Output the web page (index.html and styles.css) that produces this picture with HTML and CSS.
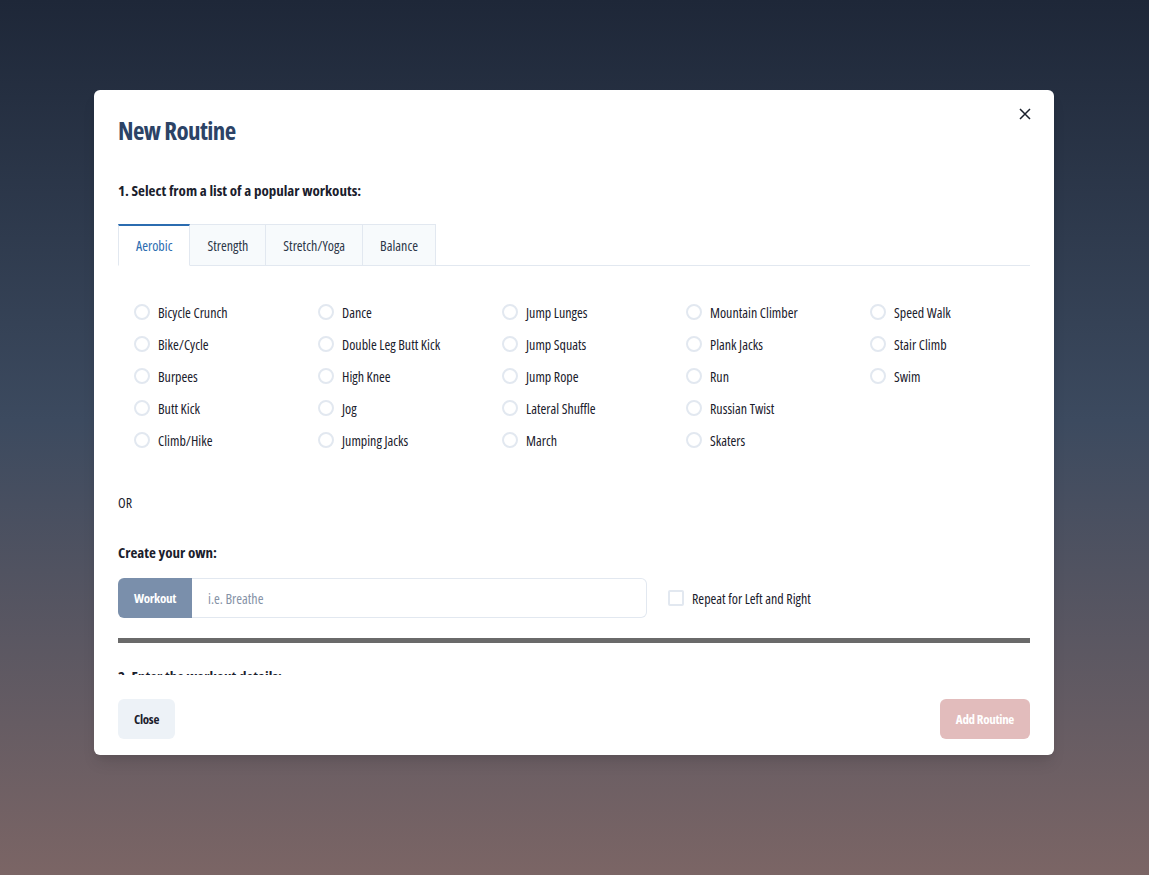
FILE: index.html
```html
<!DOCTYPE html>
<html lang="en">
<head>
<meta charset="utf-8">
<title>New Routine</title>
<link rel="stylesheet" href="styles.css">
</head>
<body>
<div class="backdrop">
  <section class="modal">
    <header class="modal-header">
      <h2 class="modal-title">New Routine</h2>
      <button class="close-x" aria-label="Close">
        <svg width="12" height="12" viewBox="0 0 12 12"><path d="M1 1L11 11M11 1L1 11" stroke="#1a202c" stroke-width="1.5" fill="none"/></svg>
      </button>
    </header>
    <div class="modal-body">
      <h3 class="section-title">1. Select from a list of a popular workouts:</h3>
      <div class="tabs">
        <div class="tab active">Aerobic</div>
        <div class="tab">Strength</div>
        <div class="tab">Stretch/Yoga</div>
        <div class="tab">Balance</div>
      </div>
      <div class="tab-panel">
        <div class="radio-grid">
          <label class="radio"><span class="circle"></span>Bicycle Crunch</label>
          <label class="radio"><span class="circle"></span>Bike/Cycle</label>
          <label class="radio"><span class="circle"></span>Burpees</label>
          <label class="radio"><span class="circle"></span>Butt Kick</label>
          <label class="radio"><span class="circle"></span>Climb/Hike</label>
          <label class="radio"><span class="circle"></span>Dance</label>
          <label class="radio"><span class="circle"></span>Double Leg Butt Kick</label>
          <label class="radio"><span class="circle"></span>High Knee</label>
          <label class="radio"><span class="circle"></span>Jog</label>
          <label class="radio"><span class="circle"></span>Jumping Jacks</label>
          <label class="radio"><span class="circle"></span>Jump Lunges</label>
          <label class="radio"><span class="circle"></span>Jump Squats</label>
          <label class="radio"><span class="circle"></span>Jump Rope</label>
          <label class="radio"><span class="circle"></span>Lateral Shuffle</label>
          <label class="radio"><span class="circle"></span>March</label>
          <label class="radio"><span class="circle"></span>Mountain Climber</label>
          <label class="radio"><span class="circle"></span>Plank Jacks</label>
          <label class="radio"><span class="circle"></span>Run</label>
          <label class="radio"><span class="circle"></span>Russian Twist</label>
          <label class="radio"><span class="circle"></span>Skaters</label>
          <label class="radio"><span class="circle"></span>Speed Walk</label>
          <label class="radio"><span class="circle"></span>Stair Climb</label>
          <label class="radio"><span class="circle"></span>Swim</label>
        </div>
      </div>
      <p class="or">OR</p>
      <h3 class="section-title own">Create your own:</h3>
      <div class="own-row">
        <div class="input-group">
          <span class="addon">Workout</span>
          <span class="input-field">i.e. Breathe</span>
        </div>
        <label class="check"><span class="box"></span>Repeat for Left and Right</label>
      </div>
      <div class="divider"></div>
      <h3 class="section-title step2">2. Enter the workout details:</h3>
    </div>
    <footer class="modal-footer">
      <button class="btn btn-close">Close</button>
      <button class="btn btn-add">Add Routine</button>
    </footer>
  </section>
</div>
</body>
</html>
```
FILE: styles.css
```css
* { box-sizing: border-box; }
html, body { margin: 0; padding: 0; }
body {
  font-family: "Open Sans", "DejaVu Sans Condensed", sans-serif;
  font-stretch: 75%;
  color: #1a202c;
}
.backdrop {
  width: 1149px;
  height: 875px;
  padding-top: 90px;
  padding-left: 94px;
  background: linear-gradient(to bottom, #1e2738 0%, #3c4a5f 48%, #7b6565 100%);
}
.modal {
  position: relative;
  width: 960px;
  background: #fff;
  border-radius: 6px;
  box-shadow: 0 10px 15px -3px rgba(0,0,0,.1), 0 4px 6px -2px rgba(0,0,0,.05);
}
.modal-header { padding: 22px 24px 0; }
.modal-title {
  margin: 0;
  font-size: 25px;
  letter-spacing: -0.6px;
  line-height: 36px;
  font-weight: 700;
  color: #2c4366;
}
.close-x {
  position: absolute;
  top: 8px;
  right: 13px;
  width: 32px;
  height: 32px;
  border: 0;
  background: transparent;
  padding: 0;
  display: flex;
  align-items: center;
  justify-content: center;
}
.modal-body {
  height: 527px;
  overflow: hidden;
  padding: 32px 24px 0;
}
.section-title {
  margin: 0;
  font-size: 15px;
  line-height: 20px;
  font-weight: 700;
  color: #1a202c;
}
.tabs {
  display: flex;
  margin-top: 24px;
  border-bottom: 1px solid #e2e8f0;
}
.tab {
  height: 42px;
  margin-bottom: -1px;
  padding: 0 17px;
  display: flex;
  align-items: center;
  font-size: 14px;
  color: #2d3748;
  background: #f7fafc;
  border: 1px solid #e2e8f0;
  border-left-width: 0;
}
.tab.active {
  background: #fff;
  color: #2b6cb0;
  border-left-width: 1px;
  border-top: 2px solid #2b6cb0;
  border-bottom-color: #fff;
}
.tab-panel { padding: 30px 16px 0; }
.radio-grid {
  display: grid;
  grid-template-rows: repeat(5, 32px);
  grid-auto-flow: column;
  grid-template-columns: repeat(5, 184px);
}
.radio {
  display: flex;
  align-items: center;
  font-size: 14px;
  color: #1a202c;
}
.circle {
  width: 16px;
  height: 16px;
  border: 2px solid #e2e8f0;
  border-radius: 50%;
  margin-right: 8px;
  flex: none;
}
.or {
  margin: 37px 0 0;
  font-size: 14px;
  line-height: 20px;
}
.own { margin-top: 29px; }
.own-row {
  display: flex;
  align-items: center;
  margin-top: 16px;
}
.input-group {
  display: flex;
  width: 529px;
  height: 40px;
}
.addon {
  width: 74px;
  display: flex;
  align-items: center;
  justify-content: center;
  background: #7a8fab;
  color: #fff;
  font-weight: 700;
  font-size: 13px;
  letter-spacing: -0.3px;
  border-radius: 6px 0 0 6px;
}
.input-field {
  flex: 1;
  display: flex;
  align-items: center;
  padding: 0 16px;
  border: 1px solid #e2e8f0;
  border-left: 0;
  border-radius: 0 6px 6px 0;
  color: #8592a6;
  font-size: 14px;
}
.check {
  display: flex;
  align-items: center;
  margin-left: 21px;
  font-size: 14px;
}
.box {
  width: 16px;
  height: 16px;
  border: 2px solid #e2e8f0;
  border-radius: 2px;
  margin-right: 8px;
}
.divider {
  margin-top: 20px;
  height: 5px;
  background: #6a6a6a;
}
.step2 { margin-top: 23px; }
.modal-footer {
  display: flex;
  justify-content: space-between;
  padding: 24px 24px 16px;
}
.btn {
  height: 40px;
  padding: 0 16px;
  border: 0;
  border-radius: 6px;
  font-family: inherit;
  font-stretch: inherit;
  font-weight: 700;
  font-size: 13px;
  letter-spacing: -0.3px;
}
.btn-close { background: #edf2f7; color: #1a202c; }
.btn-add { background: #e2bcbc; color: #fff; }
```
